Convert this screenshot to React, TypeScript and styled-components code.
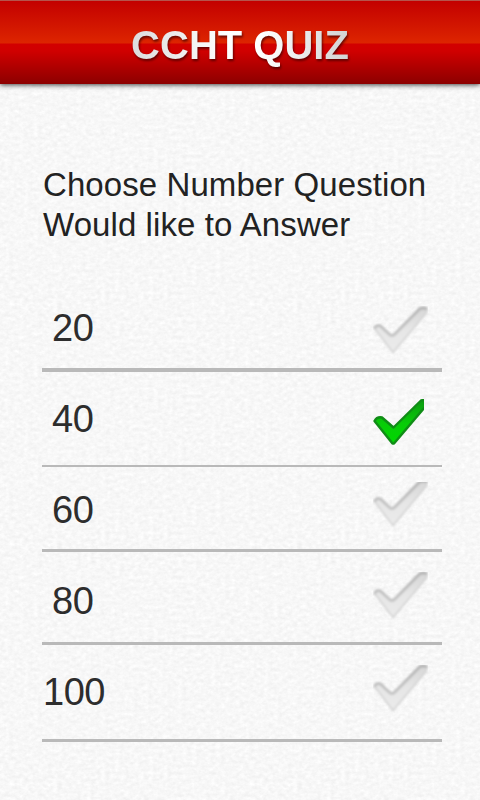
import { useState } from 'react';
import styled, { createGlobalStyle } from 'styled-components';

// fine paper grain, tiled over the page
const grain = (
  "<svg xmlns='http://www.w3.org/2000/svg' width='240' height='240'>" +
  "<filter id='g' x='0' y='0' width='100%' height='100%' color-interpolation-filters='sRGB'>" +
  "<feTurbulence type='fractalNoise' baseFrequency='0.21 0.27' numOctaves='4' seed='11' stitchTiles='stitch'/>" +
  "<feColorMatrix values='0.07 0.03 0 0 0.92  0.07 0.03 0 0 0.92  0.07 0.03 0 0 0.92  0 0 0 0 1'/>" +
  "</filter><rect width='240' height='240' filter='url(#g)'/></svg>"
);

const GlobalStyle = createGlobalStyle`
  body {
    margin: 0;
    background-color: #f7f7f7;
    background-image: url("data:image/svg+xml,${encodeURIComponent(grain).replace(/'/g, '%27').replace(/\(/g, '%28').replace(/\)/g, '%29')}");
    font-family: "Liberation Sans", Arial, sans-serif;
  }
`;

const Screen = styled.div`
  display: flex;
  flex-direction: column;
  width: 480px;
  height: 800px;
  overflow: hidden;
`;

const Header = styled.header`
  display: flex;
  justify-content: center;
  box-sizing: border-box;
  height: 84px;
  padding-top: 22px;
  border-top: 1px solid #b5544c;
  background: linear-gradient(#c30000 0, #dd2500 42px, #d20000 43px, #d00000 50px, #8c0000 83px);
  box-shadow: 0 1px 5px rgba(0, 0, 0, 0.75);
`;

const Title = styled.h1`
  margin: 0;
  font-size: 40px;
  line-height: 44px;
  font-weight: bold;
  white-space: nowrap;
  color: transparent;
  background: linear-gradient(90deg, #dcdcdc, #fff 45%, #fff 60%, #d2d2d2);
  background-clip: text;
  -webkit-background-clip: text;
  filter: drop-shadow(1px 2px 1px rgba(60, 0, 0, 0.7));
`;

const Question = styled.h2`
  margin: 81px 0 0 43px;
  font-size: 33px;
  line-height: 40px;
  letter-spacing: 0.08px;
  font-weight: normal;
  white-space: nowrap;
  color: #222;
`;

const Options = styled.ul`
  list-style: none;
  width: 400px;
  margin: 40px 0 0 42px;
  padding: 0;
`;

const Option = styled.li<{ $height: number; $line: number }>`
  display: flex;
  justify-content: space-between;
  align-items: flex-start;
  box-sizing: border-box;
  height: ${(props) => props.$height}px;
  padding-right: 14px;
  border-bottom: ${(props) => props.$line}px solid #b9b9b9;
  cursor: pointer;
`;

const Label = styled.span<{ $top: number; $wide: boolean }>`
  margin-top: ${(props) => props.$top}px;
  margin-left: ${(props) => (props.$wide ? 1 : 10)}px;
  font-size: 38px;
  line-height: 38px;
  letter-spacing: -0.5px;
  color: #2d2d2d;
`;

const Mark = styled.svg<{ $top: number }>`
  width: 55px;
  height: 49px;
  margin-top: ${(props) => props.$top}px;
`;

interface CheckProps {
  checked: boolean;
  top: number;
  clip: number;
}

// clip cuts the upper end of the tick, in px
function Check({ checked, top, clip }: CheckProps) {
  if (checked) {
    return (
      <Mark $top={top} viewBox="0 0 55 49">
        <defs>
          <linearGradient id="green" x1="0" y1="0" x2="0" y2="1">
            <stop offset="0" stopColor="#0b9a10" />
            <stop offset="0.55" stopColor="#08cc08" />
            <stop offset="1" stopColor="#00d800" />
          </linearGradient>
          <clipPath id="greenEdge"><rect width="51" height="49" /></clipPath>
        </defs>
        <path
          clipPath="url(#greenEdge)"
          d="M1.5 22 Q4 17.5 9 18.5 L20.5 28.5 L48 1.5 L52 0.5 V8 L21 44.5 L19.5 44.5 Z"
          fill="url(#green)"
          stroke="#108c16"
          strokeWidth="2.4"
          strokeLinejoin="round"
        />
      </Mark>
    );
  }
  return (
    <Mark $top={top - clip} viewBox="0 0 55 49">
      <defs>
        <linearGradient id="gray" x1="0" y1="0" x2="0" y2="1">
          <stop offset="0" stopColor="#d6d6d6" />
          <stop offset="0.5" stopColor="#e6e6e6" />
          <stop offset="1" stopColor="#ebebeb" />
        </linearGradient>
        <linearGradient id="grayLine" x1="0" y1="0" x2="0" y2="1">
          <stop offset="0" stopColor="#b5b5b5" />
          <stop offset="0.5" stopColor="#bcbcbc" />
          <stop offset="1" stopColor="#c4c4c4" />
        </linearGradient>
        <clipPath id={`edge${clip}`}><rect y={clip} width="55" height="49" /></clipPath>
        <filter id="soft"><feGaussianBlur stdDeviation="0.8" /></filter>
      </defs>
      <g clipPath={`url(#edge${clip})`}>
        <g filter="url(#soft)">
          <path
            d="M1.5 22.5 Q2.5 18 7.5 19.5 L19 30 L46.5 2 Q50 0 54 2 L53.5 7 L20 46.5 Z"
            fill="url(#gray)"
            stroke="#d2d2d2"
            strokeWidth="1.5"
            strokeLinejoin="round"
          />
          <path
            d="M1.5 23 Q2.5 18.5 7.5 20 L16 28 Q19 31 22 28 L46.5 3 Q50 1 54 3"
            fill="none"
            stroke="url(#grayLine)"
            strokeWidth="2.8"
          />
        </g>
      </g>
    </Mark>
  );
}

const options = [
  { value: 20, height: 87, line: 4, labelTop: 24, checkTop: 21, clip: 0 },
  { value: 40, height: 95, line: 2, labelTop: 28, checkTop: 27, clip: 0 },
  { value: 60, height: 85, line: 3, labelTop: 24, checkTop: 15, clip: 3 },
  { value: 80, height: 93, line: 3, labelTop: 30, checkTop: 20, clip: 1 },
  { value: 100, height: 97, line: 3, labelTop: 28, checkTop: 20, clip: 1 },
];

export default function App() {
  const [selected, setSelected] = useState<number>(40);

  return (
    <>
      <GlobalStyle />
      <Screen>
        <Header>
          <Title>CCHT QUIZ</Title>
        </Header>
        <Question>
          Choose Number Question
          <br />
          Would like to Answer
        </Question>
        <Options>
          {options.map((option) => (
            <Option
              key={option.value}
              $height={option.height}
              $line={option.line}
              onClick={() => setSelected(option.value)}
            >
              <Label $top={option.labelTop} $wide={option.value > 99}>{option.value}</Label>
              <Check checked={selected === option.value} top={option.checkTop} clip={option.clip} />
            </Option>
          ))}
        </Options>
      </Screen>
    </>
  );
}
